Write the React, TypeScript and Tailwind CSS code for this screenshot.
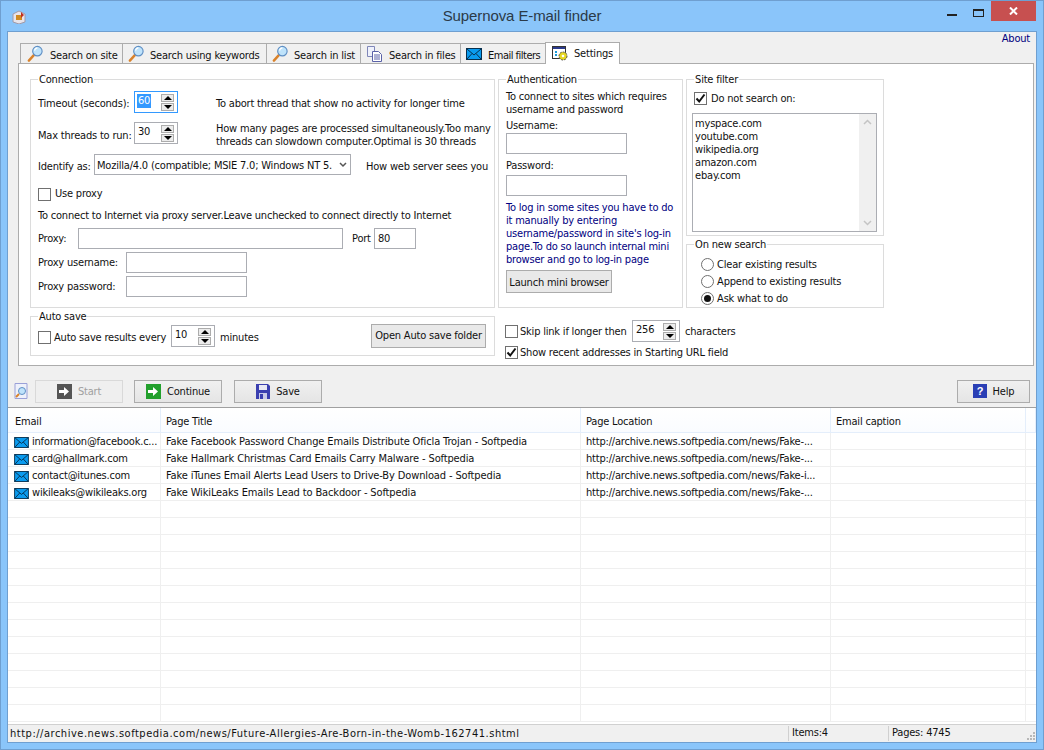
import React from "react";

const Mag = () => (
  <svg width="17" height="17" viewBox="0 0 18 18" className="shrink-0">
    <path d="M2 16.500 L7 11" stroke="#d9822b" strokeWidth="2.600" strokeLinecap="round" />
    <circle cx="11" cy="6.500" r="5" fill="#bfe3fb" stroke="#5f8fc4" strokeWidth="1.200" />
    <path d="M8 6 A3.500 3.500 0 0 1 11 3" stroke="#fff" strokeWidth="1.200" fill="none" />
  </svg>
);
const Doc = () => (
  <svg width="16" height="16" viewBox="0 0 16 16" className="shrink-0">
    <path d="M1.500 .5h7l0 10h-7z" fill="#eef1fb" stroke="#7f86b8" />
    <path d="M6.500 5.500h6l3 3v7h-9z" fill="#fff" stroke="#5a62a8" />
    <path d="M8 9h6M8 11h6M8 13h6" stroke="#5a62a8" />
  </svg>
);
const Mail = ({ w = 16, h = 12 }: { w?: number; h?: number }) => (
  <svg width={w} height={h} viewBox="0 0 16 12" className="shrink-0">
    <rect x=".5" y=".5" width="15" height="11" fill="#0a9bef" stroke="#06304f" />
    <path d="M1 1l7 6 7-6M1 11l5-5.500M15 11l-5-5.500" stroke="#06304f" fill="none" />
  </svg>
);
const Gear = () => (
  <svg width="17" height="16" viewBox="0 0 17 16" className="shrink-0">
    <rect x=".5" y=".5" width="13" height="12" fill="#fff" stroke="#333" />
    <rect x="1" y="1" width="12" height="2" fill="#2a3a8c" />
    <rect x="3" y="5" width="2" height="2" fill="#1a9ad6" />
    <rect x="3" y="8" width="2" height="2" fill="#1a9ad6" />
    <circle cx="11" cy="10" r="4" fill="#e8d820" stroke="#555" strokeDasharray="2 1" />
    <circle cx="11" cy="10" r="1.300" fill="#fff" />
  </svg>
);

const Tab = ({ icon, label, w }: { icon: React.ReactNode; label: string; w: string }) => (
  <div className={`${w} h-[20px] flex items-center bg-[#f0f0f0] border border-b-0 border-[#acacac] -mr-px whitespace-nowrap`}>
    {icon}
    <span className="pt-[4px]">{label}</span>
  </div>
);

const Group = ({ title, className, children }: { title: string; className: string; children?: React.ReactNode }) => (
  <div className={`relative border border-[#dcdcdc] ${className}`}>
    <span className="absolute -top-[7px] left-[7px] bg-white px-px leading-[14px]">{title}</span>
    {children}
  </div>
);

const Spin = ({ v, sel, w = "w-[44px]" }: { v: string; sel?: boolean; w?: string }) => (
  <div className={`${w} h-[22px] bg-white border ${sel ? "border-[#3399ff]" : "border-[#abadb3]"} flex items-center justify-between pl-[2px] pr-[3px] shrink-0`}>
    <span className={sel ? "bg-[#3399ff] text-white leading-[14px] px-px -mt-[2px]" : "px-px leading-[14px] -mt-[2px]"}>{v}</span>
    <div className="flex flex-col gap-px">
      <div className="w-[13px] h-[8px] bg-[#ececec] border border-[#acacac] flex items-center justify-center">
        <div className="w-0 h-0 border-x-[4px] border-x-transparent border-b-[4px] border-b-black" />
      </div>
      <div className="w-[13px] h-[8px] bg-[#ececec] border border-[#acacac] flex items-center justify-center">
        <div className="w-0 h-0 border-x-[4px] border-x-transparent border-t-[4px] border-t-black" />
      </div>
    </div>
  </div>
);

const Check = ({ on }: { on?: boolean }) => (
  <div className="w-[13px] h-[13px] bg-white border border-[#707070] shrink-0 flex items-center justify-center">
    {on && (
      <svg width="11" height="11" viewBox="0 0 11 11">
        <path d="M1.500 5.500 L4.200 8.500 L9.500 1.500" stroke="#111" strokeWidth="2" fill="none" />
      </svg>
    )}
  </div>
);
const Radio = ({ on }: { on?: boolean }) => (
  <div className="w-[13px] h-[13px] rounded-full bg-white border border-[#707070] shrink-0 flex items-center justify-center">
    {on && <div className="w-[7px] h-[7px] rounded-full bg-[#111]" />}
  </div>
);
const Input = ({ w }: { w: string }) => <div className={`${w} h-[21px] bg-white border border-[#abadb3] shrink-0`} />;

const Btn = ({ icon, label, dim, w = "w-[88px]" }: { icon: React.ReactNode; label: string; dim?: boolean; w?: string }) => (
  <div className={`${w} h-[23px] flex items-center justify-center gap-[6px] border ${dim ? "border-[#d9d9d9] bg-[#efefef] text-[#a0a0a0]" : "border-[#acacac] bg-gradient-to-b from-[#f0f0f0] to-[#e5e5e5]"}`}>
    {icon}
    <span className="pt-[2px]">{label}</span>
  </div>
);

const Arrow = ({ bg }: { bg: string }) => (
  <svg width="15" height="15" viewBox="0 0 15 15">
    <rect width="15" height="15" fill={bg} />
    <path d="M2 6h5V3l5 4.500-5 4.500V9H2z" fill="#fff" />
  </svg>
);
const Floppy = () => (
  <svg width="14" height="15" viewBox="0 0 14 15">
    <path d="M0 0h12l2 2v13H0z" fill="#3a3fb0" />
    <rect x="3" y="1" width="8" height="5" fill="#e8e8f4" />
    <rect x="3" y="9" width="8" height="6" fill="#c9cbe8" />
    <rect x="4" y="10" width="3" height="5" fill="#3a3fb0" />
  </svg>
);
const Help = () => (
  <svg width="14" height="14" viewBox="0 0 14 14">
    <rect width="14" height="14" fill="#2a3fb5" />
    <text x="7" y="11" textAnchor="middle" fontSize="11" fontWeight="700" fill="#fff" fontFamily="Liberation Sans">?</text>
  </svg>
);

const rows = [
  ["information@facebook.c...", "Fake Facebook Password Change Emails Distribute Oficla Trojan - Softpedia", "http://archive.news.softpedia.com/news/Fake-..."],
  ["card@hallmark.com", "Fake Hallmark Christmas Card Emails Carry Malware - Softpedia", "http://archive.news.softpedia.com/news/Fake-..."],
  ["contact@itunes.com", "Fake iTunes Email Alerts Lead Users to Drive-By Download - Softpedia", "http://archive.news.softpedia.com/news/Fake-i..."],
  ["wikileaks@wikileaks.org", "Fake WikiLeaks Emails Lead to Backdoor - Softpedia", "http://archive.news.softpedia.com/news/Fake-..."],
];
const cols = "grid grid-cols-[153px_420px_250px_195px_1fr]";

export default function App() {
  return (
    <div className="w-[1044px] h-[750px] bg-[#8ac5fa] border border-[#6f9fd0] text-[11px] leading-[14px] text-[#111] flex flex-col overflow-hidden font-['DejaVu_Sans_Condensed','Liberation_Sans',sans-serif] tracking-[-0.2px]">
      <div className="h-[30px] shrink-0 flex items-start relative">
        <svg width="14" height="14" viewBox="0 0 14 14" className="ml-[11px] mt-[9px]">
          <path d="M1 4l6-3 6 3v8l-6 2-6-2z" fill="#e8e4ea" stroke="#a09aa8" />
          <rect x="4" y="5" width="6" height="5" fill="#d08a20" />
          <path d="M9 2l3 3-3 3" fill="#c03020" />
        </svg>
        <div className="absolute left-0 right-0 top-[6px] text-center text-[15px] leading-[18px] text-[#2b3a48] tracking-[-0.1px] font-['Liberation_Sans',sans-serif]">Supernova E-mail finder</div>
        <div className="ml-auto flex items-start mr-[7px]">
          <div className="w-[26px] h-[20px] flex items-center justify-center pt-[7px]"><div className="w-[10px] h-[2px] bg-[#222]" /></div>
          <div className="w-[26px] h-[20px] flex items-center justify-center pt-[3px]"><div className="w-[11px] h-[8px] border border-t-2 border-[#222]" /></div>
          <div className="w-[45px] h-[20px] bg-[#c75050] flex items-center justify-center text-white">
            <svg width="9" height="8" viewBox="0 0 9 8"><path d="M1 0.500L8 7.500M8 0.500L1 7.500" stroke="#fff" strokeWidth="2" /></svg>
          </div>
        </div>
      </div>

      <div className="flex-1 mx-[6px] mb-[6px] border border-[#6f9fd0] bg-[#f0f0f0] flex flex-col min-h-0">
        <div className="h-[31px] shrink-0 flex items-end pl-[12px] relative">
          <Tab w="w-[103px] pl-[6px] gap-[6px]" icon={<Mag />} label="Search on site" />
          <Tab w="w-[145px] pl-[5px] gap-[5px]" icon={<Mag />} label="Search using keywords" />
          <Tab w="w-[95px] pl-[5px] gap-[5px]" icon={<Mag />} label="Search in list" />
          <Tab w="w-[101px] pl-[5px] gap-[7px]" icon={<Doc />} label="Search in files" />
          <Tab w="w-[86px] pl-[5px] gap-[6px] tracking-[-0.5px]" icon={<Mail />} label="Email filters" />
          <div className="w-[75px] h-[22px] flex items-center gap-[5px] pl-[6px] bg-white border border-b-0 border-[#acacac] relative z-10 -mb-px">
            <Gear />
            <span>Settings</span>
          </div>
          <span className="absolute right-[6px] top-0 text-[#00007f]">About</span>
        </div>

        <div className="h-[303px] shrink-0 ml-[10px] mr-[2px] bg-white border border-[#acacac] flex gap-[3px] pl-[11px] pt-[15px]">
          <div className="w-[465px] flex flex-col shrink-0">
            <Group title="Connection" className="h-[229px] flex flex-col pl-[7px] pt-[11px]">
              <div className="h-[22px] flex items-center">
                <span className="w-[96px] shrink-0 whitespace-nowrap pt-[4px]">Timeout (seconds):</span>
                <Spin v="60" sel />
                <span className="ml-[38px] whitespace-nowrap pt-[4px]">To abort thread that show no activity for longer time</span>
              </div>
              <div className="h-[22px] mt-[9px] flex items-center">
                <span className="w-[96px] shrink-0 whitespace-nowrap pt-[6px]">Max threads to run:</span>
                <Spin v="30" />
                <span className="ml-[38px] leading-[13px] w-[285px] whitespace-nowrap pt-[4px]">How many pages are processed simultaneously.Too many<br />threads can slowdown computer.Optimal is 30 threads</span>
              </div>
              <div className="h-[21px] mt-[10px] flex items-center">
                <span className="w-[56px] shrink-0 whitespace-nowrap pt-[5px]">Identify as:</span>
                <div className="w-[257px] shrink-0 h-[21px] bg-white border border-[#abadb3] flex items-center pl-[2px] justify-between pr-[3px] overflow-hidden whitespace-nowrap">
                  <span className="w-[235px] overflow-hidden pt-[2px]">Mozilla/4.0 (compatible; MSIE 7.0; Windows NT 5.1)</span>
                  <svg width="8" height="6" viewBox="0 0 8 6"><path d="M1 1l3 3 3-3" stroke="#555" strokeWidth="1.500" fill="none" /></svg>
                </div>
                <span className="ml-[15px] whitespace-nowrap pt-[5px]">How web server sees you</span>
              </div>
              <div className="h-[14px] mt-[12px] flex items-center gap-[4px]"><Check /><span>Use proxy</span></div>
              <div className="h-[14px] whitespace-nowrap leading-[14px] mt-[8px]">To connect to Internet via proxy server.Leave unchecked to connect directly to Internet</div>
              <div className="h-[21px] mt-[5px] flex items-center">
                <span className="w-[40px] shrink-0">Proxy:</span>
                <Input w="w-[265px]" />
                <span className="ml-[9px] w-[22px] shrink-0">Port</span>
                <div className="w-[42px] h-[21px] bg-white border border-[#abadb3] flex items-center pl-[3px]">80</div>
              </div>
              <div className="h-[21px] mt-[3px] flex items-center"><span className="w-[88px] shrink-0 whitespace-nowrap">Proxy username:</span><Input w="w-[121px]" /></div>
              <div className="h-[21px] mt-[3px] flex items-center"><span className="w-[88px] shrink-0 whitespace-nowrap">Proxy password:</span><Input w="w-[121px]" /></div>
            </Group>
            <Group title="Auto save" className="h-[40px] mt-[8px] flex items-center pl-[7px] pr-[8px]">
              <div className="pt-[2px]"><Check /></div>
              <span className="ml-[3px] w-[114px] shrink-0 whitespace-nowrap pt-[4px]">Auto save results every</span>
              <div className="ml-[3px]"><Spin v="10" /></div>
              <span className="ml-[5px] pt-[4px]">minutes</span>
              <div className="ml-auto h-[24px] w-[115px] flex items-center justify-center bg-[#e9e9e9] border border-[#acacac] whitespace-nowrap">Open Auto save folder</div>
            </Group>
          </div>

          <div className="w-[386px] shrink-0 flex flex-col">
            <div className="flex gap-[3px] h-[229px]">
              <Group title="Authentication" className="w-[186px] h-[229px] pl-[7px] pt-[10px] flex flex-col items-start">
                <div className="leading-[13px] whitespace-nowrap">To connect to sites which requires<br />username and password</div>
                <div className="mt-[3px]">Username:</div>
                <div className="mt-0"><Input w="w-[121px]" /></div>
                <div className="mt-[5px]">Password:</div>
                <div className="mt-[2px]"><Input w="w-[121px]" /></div>
                <div className="text-[#00007f] leading-[13px] mt-[5px] whitespace-nowrap">To log in some sites you have to do<br />it manually by entering<br />username/password in site's log-in<br />page.To do so launch internal mini<br />browser and go to log-in page</div>
                <div className="mt-[4px] h-[23px] w-[106px] flex items-center justify-center bg-[#e9e9e9] border border-[#acacac] whitespace-nowrap"><span className="pt-[2px]">Launch mini browser</span></div>
              </Group>
              <div className="w-[199px] flex flex-col">
                <Group title="Site filter" className="h-[157px] flex flex-col pl-[7px] pt-[11px]">
                  <div className="h-[14px] flex items-center gap-[4px]"><Check on /><span className="pt-[2px]">Do not search on:</span></div>
                  <div className="mt-[8px] -ml-[2px] w-[185px] h-[119px] border border-[#abadb3] flex justify-between">
                    <div className="pl-[2px] pt-[3px] leading-[13px]">myspace.com<br />youtube.com<br />wikipedia.org<br />amazon.com<br />ebay.com</div>
                    <div className="w-[17px] bg-[#f0f0f0] flex flex-col justify-between items-center py-[5px]">
                      <svg width="9" height="6" viewBox="0 0 9 6"><path d="M1 5l3.500-3.500L8 5" stroke="#c4c4c4" strokeWidth="1.500" fill="none" /></svg>
                      <svg width="9" height="6" viewBox="0 0 9 6"><path d="M1 1l3.500 3.500L8 1" stroke="#c4c4c4" strokeWidth="1.500" fill="none" /></svg>
                    </div>
                  </div>
                </Group>
                <Group title="On new search" className="h-[64px] mt-[8px] flex flex-col pl-[14px] pt-[12px] gap-[3px]">
                  <div className="h-[14px] flex items-center gap-[3px]"><Radio /><span className="pt-[2px]">Clear existing results</span></div>
                  <div className="h-[14px] flex items-center gap-[3px]"><Radio /><span className="pt-[2px]">Append to existing results</span></div>
                  <div className="h-[14px] flex items-center gap-[3px]"><Radio on /><span className="pt-[2px]">Ask what to do</span></div>
                </Group>
              </div>
            </div>
            <div className="pl-[7px] mt-[12px] flex items-center h-[22px]">
              <Check />
              <span className="ml-[2px] w-[110px] shrink-0 whitespace-nowrap pt-[2px]">Skip link if longer then</span>
              <div className="ml-[2px]"><Spin v="256" w="w-[48px]" /></div>
              <span className="ml-[5px] pt-[2px]">characters</span>
            </div>
            <div className="pl-[7px] mt-[3px] flex items-center h-[14px] gap-[2px] whitespace-nowrap">
              <Check on />
              <span className="pt-[2px]">Show recent addresses in Starting URL field</span>
            </div>
          </div>
        </div>

        <div className="h-[38px] shrink-0 flex items-center pl-[6px] pr-[6px] pt-[12px]">
          <svg width="14" height="16" viewBox="0 0 14 16" className="shrink-0">
            <path d="M1 .5h12v15H1z" fill="#eef1fb" stroke="#9aa0d8" />
            <circle cx="8" cy="8" r="3.500" fill="#bfe3fb" stroke="#5f8fc4" />
            <path d="M2 14l3-3" stroke="#d9822b" strokeWidth="2" />
          </svg>
          <div className="ml-[7px]"><Btn dim icon={<Arrow bg="#555" />} label="Start" /></div>
          <div className="ml-[11px]"><Btn icon={<Arrow bg="#22a02c" />} label="Continue" /></div>
          <div className="ml-[12px]"><Btn icon={<Floppy />} label="Save" /></div>
          <div className="ml-auto"><Btn w="w-[73px]" icon={<Help />} label="Help" /></div>
        </div>

        <div className="h-[317px] shrink-0 mt-[3px] bg-white border-t border-[#a0a0a0] overflow-hidden">
          <div className={`${cols} h-[25px] border-b border-[#e4eefb] bg-gradient-to-b from-white to-[#fafcff]`}>
            {["Email", "Page Title", "Page Location", "Email caption", ""].map((h, i) => (
              <div key={i} className={`border-r border-[#e4eefb] ${i === 0 ? "pl-[7px]" : "pl-[5px]"} pt-[4px] flex items-center`}>{h}</div>
            ))}
          </div>
          {rows.map((r) => (
            <div key={r[0]} className={`${cols} h-[17px] border-b border-[#efefef] tracking-[-0.13px]`}>
              <div className="border-r border-[#efefef] pl-[6px] pt-[2px] flex items-center gap-[3px] whitespace-nowrap overflow-hidden tracking-[-0.2px]"><Mail w={15} h={11} /><span>{r[0]}</span></div>
              <div className="border-r border-[#efefef] pl-[5px] pt-[2px] flex items-center whitespace-nowrap overflow-hidden">{r[1]}</div>
              <div className="border-r border-[#efefef] pl-[5px] pt-[2px] flex items-center whitespace-nowrap overflow-hidden tracking-[-0.2px]">{r[2]}</div>
              <div className="border-r border-[#efefef]" />
              <div />
            </div>
          ))}
          {Array.from({ length: 13 }).map((_, i) => (
            <div key={i} className={`${cols} h-[17px] border-b border-[#efefef]`}>
              <div className="border-r border-[#efefef]" />
              <div className="border-r border-[#efefef]" />
              <div className="border-r border-[#efefef]" />
              <div className="border-r border-[#efefef]" />
              <div />
            </div>
          ))}
        </div>

        <div className="flex-1 border-t border-[#d0d0d0] flex items-center pl-[2px] whitespace-nowrap">
          <span className="w-[778px] shrink-0 tracking-[0.52px]">http://archive.news.softpedia.com/news/Future-Allergies-Are-Born-in-the-Womb-162741.shtml</span>
          <span className="w-[100px] shrink-0 border-l border-[#d0d0d0] h-[15px] pl-[3px]">Items:4</span>
          <span className="border-l border-[#d0d0d0] h-[15px] pl-[3px]">Pages: 4745</span>
          <svg width="8" height="8" viewBox="0 0 8 8" className="ml-auto mr-px self-end mb-[2px]">
            <path d="M6 0h2v2H6zM3 3h2v2H3zM6 3h2v2H6zM0 6h2v2H0zM3 6h2v2H3zM6 6h2v2H6z" fill="#b8b8b8" />
          </svg>
        </div>
      </div>
    </div>
  );
}
